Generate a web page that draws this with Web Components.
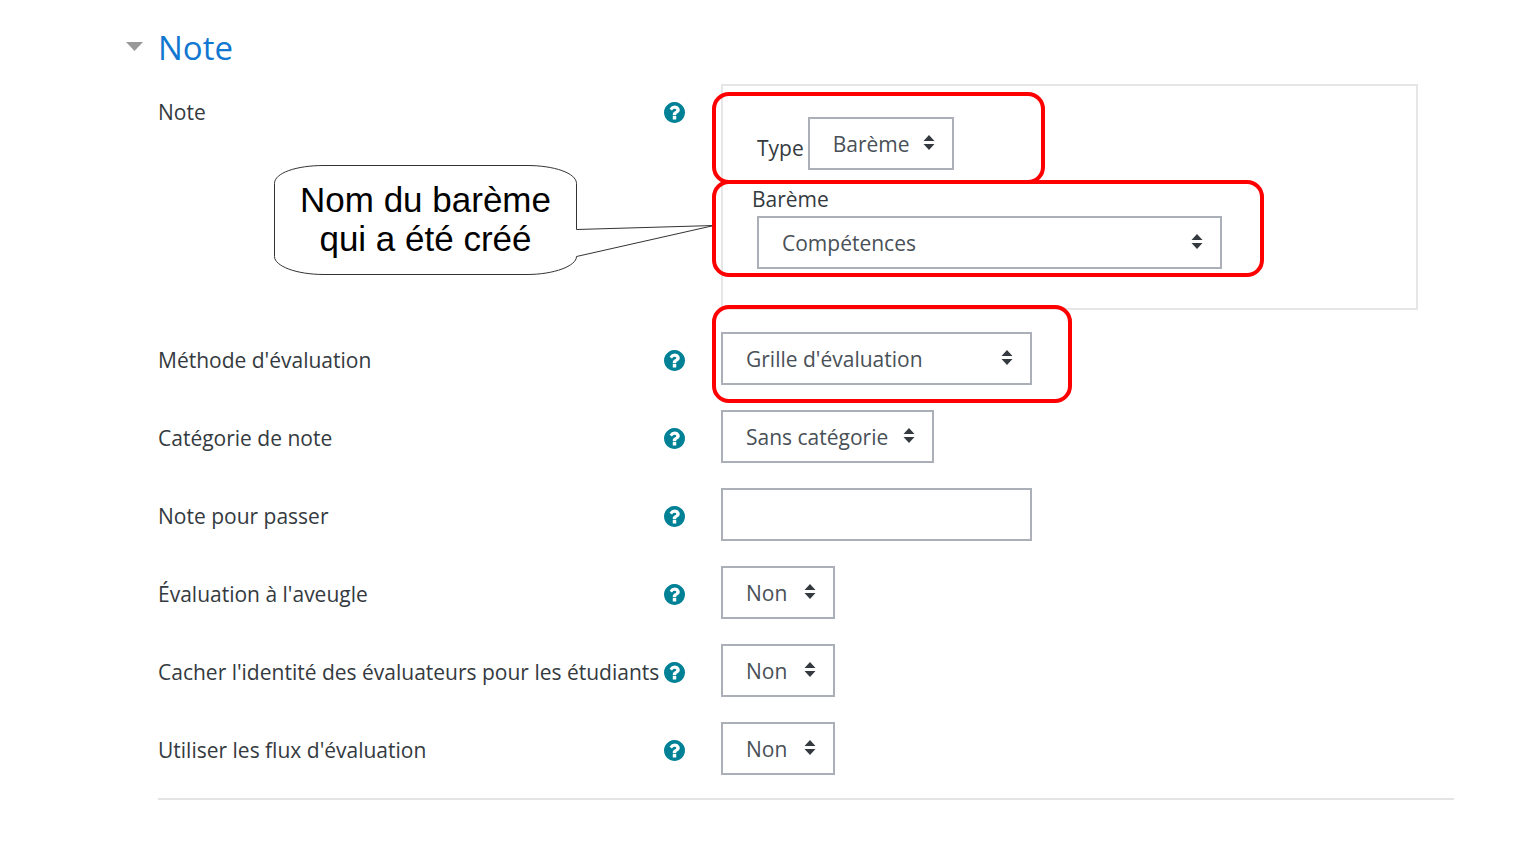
<!DOCTYPE html>
<html lang="fr">
<head>
<meta charset="utf-8">
<meta name="viewport" content="width=device-width, initial-scale=1">
<title>Note</title>
<style>
body { margin: 0; background: #fff; color: #343a40; font: 21px/30px "Open Sans", "Noto Sans", sans-serif; }
</style>
</head>
<body>
<form-section heading="Note">
  <form-row label="Note" group><grade-group></grade-group></form-row>
  <form-row label="Méthode d'évaluation" value="Grille d'évaluation" size="wide"><mark-frame slot="mark" style="--top:-27px;--right:-40px;--bottom:-18px"></mark-frame></form-row>
  <form-row label="Catégorie de note" value="Sans catégorie" size="medium"></form-row>
  <form-row label="Note pour passer" text size="wide"></form-row>
  <form-row label="Évaluation à l'aveugle" value="Non" size="small"></form-row>
  <form-row label="Cacher l'identité des évaluateurs pour les étudiants" value="Non" size="small"></form-row>
  <form-row label="Utiliser les flux d'évaluation" value="Non" size="small"></form-row>
</form-section>

<script>
const controlStyles = `
  * { box-sizing: border-box; }
  .control { position: relative; display: grid; max-width: 100%; }
  .control.small { width: 114px; }
  .control.compact { width: 146px; }
  .control.medium { width: 213px; }
  .control.wide { width: 311px; }
  .control.full { width: 465px; }
  select, input { appearance: none; grid-area: 1 / 1; width: 100%; height: 53px; margin: 0; padding: 0 23px; border: 2px solid #abb0b8; border-radius: 0; background: #fff; color: #495057; font: inherit; }
  .arrows { grid-area: 1 / 1; place-self: center end; width: 12px; height: 15px; margin: 0 19px 2px 0; pointer-events: none; }
`;
const selectMarkup = (id, value, size) => `
  <div class="control ${size}">
    <select id="${id}"><option>${value}</option></select>
    <svg class="arrows" viewBox="0 0 12 15" fill="#343a40" aria-hidden="true"><path d="M.5 6 6 0l5.500 6zM.5 9h11L6 15z"/></svg>
    <slot name="mark"></slot>
  </div>`;

customElements.define('form-section', class extends HTMLElement {
  connectedCallback() {
    this.attachShadow({ mode: 'open' }).innerHTML = `
      <style>
        :host { display: block; padding: 24px 82px 24px 126px; }
        h3 { margin: 0 0 12px; font-size: 33px; line-height: 48px; font-weight: 400; }
        a { display: flex; align-items: center; gap: 15px; color: #1177d1; text-decoration: none; }
        svg { width: 17px; height: 9px; margin-bottom: 4px; }
        .rows { display: grid; gap: 22px; margin-left: 32px; padding-bottom: 20px; border-bottom: 2px solid #e4e4e4; }
      </style>
      <h3><a href="#note"><svg viewBox="0 0 17 9" aria-hidden="true"><path d="M0 0h17L8.500 9z" fill="#999"/></svg><span>${this.getAttribute('heading')}</span></a></h3>
      <div class="rows" id="note"><slot></slot></div>`;
  }
});

customElements.define('help-button', class extends HTMLElement {
  connectedCallback() {
    this.attachShadow({ mode: 'open' }).innerHTML = `
      <style>
        :host { display: block; flex: none; }
        button { display: block; padding: 0; border: 0; background: none; cursor: pointer; }
        svg { display: block; width: 21px; height: 21px; }
      </style>
      <button type="button" aria-label="Aide"><svg viewBox="0 0 1536 1536" fill="#008196"><path d="M896 1248v-192q0-14-9-23t-23-9h-192q-14 0-23 9t-9 23v192q0 14 9 23t23 9h192q14 0 23-9t9-23zm256-672q0-88-55.500-163t-138.500-116-170-41q-243 0-371 213-15 24 8 42l132 100q7 6 19 6 16 0 25-12 53-68 86-92 34-24 86-24 48 0 85.500 26t37.500 59q0 38-20 61t-68 45q-63 28-115.500 86.500t-52.500 125.500v36q0 14 9 23t23 9h192q14 0 23-9t9-23q0-19 21.500-49.500t54.500-49.500q32-18 49-28.500t46-35 44.500-48 28-60.500 12.500-81zm384 192q0 209-103 385.500t-279.500 279.500-385.500 103-385.500-103-279.500-279.500-103-385.500 103-385.500 279.500-279.500 385.500-103 385.500 103 279.500 279.500 103 385.500z"/></svg></button>`;
  }
});

customElements.define('form-row', class extends HTMLElement {
  connectedCallback() {
    const label = this.getAttribute('label');
    const size = this.getAttribute('size');
    let title = `<label for="field">${label}</label>`;
    let field = selectMarkup('field', this.getAttribute('value'), size);
    if (this.hasAttribute('text')) field = `<div class="control ${size}"><input id="field" type="text"></div>`;
    if (this.hasAttribute('group')) {
      title = `<span>${label}</span>`;
      field = '<slot></slot>';
    }
    this.attachShadow({ mode: 'open' }).innerHTML = `
      <style>
        ${controlStyles}
        :host { display: grid; grid-template-columns: minmax(0, 563fr) minmax(0, 733fr); align-items: start; }
        .label { display: flex; align-items: center; justify-content: space-between; gap: 4px; min-height: 56px; padding-right: 36px; }
      </style>
      <div class="label">${title}<help-button></help-button></div>
      <div class="field">${field}</div>`;
  }
});

/* Red rounded outline laid over the nearest positioned box. */
customElements.define('mark-frame', class extends HTMLElement {
  connectedCallback() {
    this.attachShadow({ mode: 'open' }).innerHTML = `
      <style>
        :host { position: absolute; z-index: 1; top: var(--top); right: var(--right); bottom: var(--bottom); left: var(--left, -9px); box-sizing: border-box; border: 4px solid #f00; border-radius: 17px; pointer-events: none; }
      </style>`;
  }
});

customElements.define('call-out', class extends HTMLElement {
  connectedCallback() {
    this.attachShadow({ mode: 'open' }).innerHTML = `
      <style>
        :host { position: absolute; top: 79px; right: calc(100% + 9px); width: 440px; height: 110px; color: #000; font: 35px/39px "Liberation Sans", Arial, sans-serif; }
        svg { position: absolute; inset: 0; width: 100%; height: 100%; }
        p { position: relative; display: grid; place-content: center; width: 303px; height: 108px; margin: 0; text-align: center; }
      </style>
      <svg viewBox="0 0 440 110" fill="#fff" stroke="#333" aria-hidden="true"><path d="M.5 18.500C.5 8 22 .5 50 .5H253C280 .5 302.500 8 302.500 18.500V64.500L440 60.500 302.500 91.500C302.500 101 280 109.500 253 109.500H50C22 109.500 .5 101 .5 91.500z"/></svg>
      <p><slot></slot></p>`;
  }
});

customElements.define('grade-group', class extends HTMLElement {
  connectedCallback() {
    this.attachShadow({ mode: 'open' }).innerHTML = `
      <style>
        ${controlStyles}
        :host { display: block; position: relative; margin-right: 36px; padding: 31px 34px 39px; border: 2px solid #e6e6e6; }
        .type { display: flex; align-items: flex-end; gap: 4px; }
        .type label { line-height: 44px; }
        .scale { margin-top: 12px; }
        .scale label { display: block; margin-left: -5px; line-height: 34px; }
      </style>
      <div class="type"><label for="type">Type</label>${selectMarkup('type', 'Barème', 'compact')}</div>
      <div class="scale"><label for="scale">Barème</label>${selectMarkup('scale', 'Compétences', 'full')}</div>
      <mark-frame style="--top:6px;--right:auto;--bottom:auto;--left:-11px;width:333px;height:92px"></mark-frame>
      <mark-frame style="--top:94px;--right:auto;--bottom:auto;--left:-11px;width:552px;height:97px"></mark-frame>
      <call-out><span>Nom du barème</span><span>qui a été créé</span></call-out>`;
  }
});
</script>
</body>
</html>
